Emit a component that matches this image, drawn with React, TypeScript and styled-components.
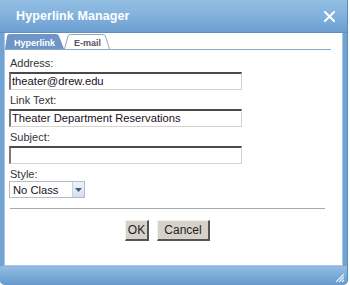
import React from "react";
import styled, { createGlobalStyle } from "styled-components";

const Global = createGlobalStyle`
  html, body { margin: 0; padding: 0; background: #ffffff; }
  body { font-family: "Liberation Sans", Arial, sans-serif; }
`;

const Frame = styled.div`
  width: 348px;
  height: 285px;
  display: flex;
  flex-direction: column;
  background: #72a3d3;
  border-radius: 0 0 5px 5px;
  overflow: hidden;
  box-sizing: border-box;
  border-right: 1px solid #5a8cbf;
`;

const TitleBar = styled.div`
  height: 33px;
  flex: none;
  display: flex;
  align-items: center;
  justify-content: space-between;
  padding: 0 12px 0 16px;
  box-sizing: border-box;
  background: linear-gradient(#93bee3, #7fb0dc 55%, #6c9ed0);
  border-bottom: 1px solid #5e90c3;
`;

const Title = styled.span`
  color: #ffffff;
  font-weight: bold;
  font-size: 12.5px;
  letter-spacing: 0.1px;
`;

const Body = styled.div`
  flex: 1;
  display: flex;
  padding: 0 4px 0 4px;
  min-height: 0;
`;

const Content = styled.div`
  flex: 1;
  background: #ffffff;
  border-left: 1px solid #a9c7e4;
  border-right: 1px solid #a9c7e4;
  border-bottom: 1px solid #a9c7e4;
  display: flex;
  flex-direction: column;
`;

const TabStrip = styled.div`
  display: flex;
  margin: 1px 11px 0 0;
  height: 15px;
  border-bottom: 1px solid #86a8d0;
`;

const Tab = styled.div<{ $active?: boolean }>`
  position: relative;
  width: ${(p) => (p.$active ? 59 : 45)}px;
  height: 15px;
  margin-right: ${(p) => (p.$active ? 0 : 0)}px;
  display: flex;
  align-items: center;
  padding-left: ${(p) => (p.$active ? 9 : 10)}px;
  box-sizing: border-box;
  font-size: 9px;
  font-weight: bold;
  color: ${(p) => (p.$active ? "#ffffff" : "#555555")};
  svg {
    position: absolute;
    left: 0;
    top: 0;
  }
  span {
    position: relative;
    top: 1px;
  }
`;

const Form = styled.div`
  display: flex;
  flex-direction: column;
  padding: 7px 17px 0 4px;
`;

const Label = styled.div<{ $tight?: boolean }>`
  font-size: 11px;
  line-height: 13px;
  color: #333333;
  padding-left: 1px;
  margin-bottom: ${(p) => (p.$tight ? 0 : 2)}px;
`;

const Input = styled.div`
  width: 233px;
  height: 18px;
  box-sizing: border-box;
  border-style: solid;
  border-width: 2px 1px 1px 2px;
  border-color: #4a4a4a #d6d3cc #d6d3cc #7a7a7a;
  font-size: 11.2px;
  line-height: 15px;
  padding-left: 1px;
  color: #1a0f1e;
  margin-bottom: 4px;
  white-space: nowrap;
`;

const Select = styled.div`
  width: 76px;
  height: 17px;
  box-sizing: border-box;
  border: 1px solid #b4bcc6;
  display: flex;
  align-items: center;
  justify-content: space-between;
  font-size: 11.2px;
  color: #1a0f1e;
  padding-left: 3px;
`;

const SelectArrow = styled.div`
  width: 12px;
  height: 15px;
  box-sizing: border-box;
  background: linear-gradient(#eef3f8, #d5e0ec);
  border-left: 1px solid #c6d2df;
  display: flex;
  align-items: center;
  justify-content: center;
`;

const Rule = styled.div`
  height: 1px;
  background: #a9a9a9;
  margin-top: 10px;
  margin-left: 1px;
`;

const Buttons = styled.div`
  display: flex;
  justify-content: center;
  gap: 8px;
  margin-top: 11px;
  padding-left: 1px;
`;

const Button = styled.div<{ $w: number }>`
  width: ${(p) => p.$w}px;
  height: 21px;
  box-sizing: border-box;
  background: #d6d2ca;
  border-style: solid;
  border-width: 1px 2px 2px 1px;
  border-color: #f4f2ee #555555 #555555 #f4f2ee;
  display: flex;
  align-items: center;
  justify-content: center;
  font-size: 12px;
  color: #1e1e1e;
`;

const BottomBar = styled.div`
  height: 19px;
  flex: none;
  display: flex;
  justify-content: flex-end;
  align-items: flex-end;
  padding: 0 2px 2px 0;
  box-sizing: border-box;
  background: linear-gradient(#94bde2, #78aad8 50%, #6899cc);
  border-top: 1px solid #8eb6dc;
`;

export default function App() {
  return (
    <>
      <Global />
      <Frame>
        <TitleBar>
          <Title>Hyperlink Manager</Title>
          <svg width="11" height="11" viewBox="0 0 11 11">
            <path d="M1 1 L10 10 M10 1 L1 10" stroke="#ffffff" strokeWidth="2" strokeLinecap="square" />
          </svg>
        </TitleBar>
        <Body>
          <Content>
            <TabStrip>
              <Tab $active>
                <svg width="59" height="15" viewBox="0 0 59 15">
                  <path d="M0 15 L2 2 Q2.5 0 4.5 0 L51 0 Q53 0 54 2 L59 15 Z" fill="#6f94c6" />
                </svg>
                <span>Hyperlink</span>
              </Tab>
              <Tab>
                <svg width="46" height="15" viewBox="0 0 46 15">
                  <path d="M0.5 15 L4 2 Q4.6 0.5 6.5 0.5 L39 0.5 Q40.8 0.5 41.4 2 L45.5 15" fill="#ffffff" stroke="#9aa6b4" strokeWidth="1" />
                </svg>
                <span>E-mail</span>
              </Tab>
            </TabStrip>
            <Form>
              <Label>Address:</Label>
              <Input>theater@drew.edu</Input>
              <Label>Link Text:</Label>
              <Input>Theater Department Reservations</Input>
              <Label>Subject:</Label>
              <Input />
              <Label $tight>Style:</Label>
              <Select>
                <span>No Class</span>
                <SelectArrow>
                  <svg width="7" height="4" viewBox="0 0 7 4">
                    <path d="M0 0 L7 0 L3.5 4 Z" fill="#3d5d88" />
                  </svg>
                </SelectArrow>
              </Select>
              <Rule />
              <Buttons>
                <Button $w={24}>OK</Button>
                <Button $w={53}>Cancel</Button>
              </Buttons>
            </Form>
          </Content>
        </Body>
        <BottomBar>
          <svg width="11" height="11" viewBox="0 0 11 11">
            <path d="M10 2 L2 10 M10 5 L5 10 M10 8 L8 10" stroke="#e8f1fa" strokeWidth="1.2" />
          </svg>
        </BottomBar>
      </Frame>
    </>
  );
}
